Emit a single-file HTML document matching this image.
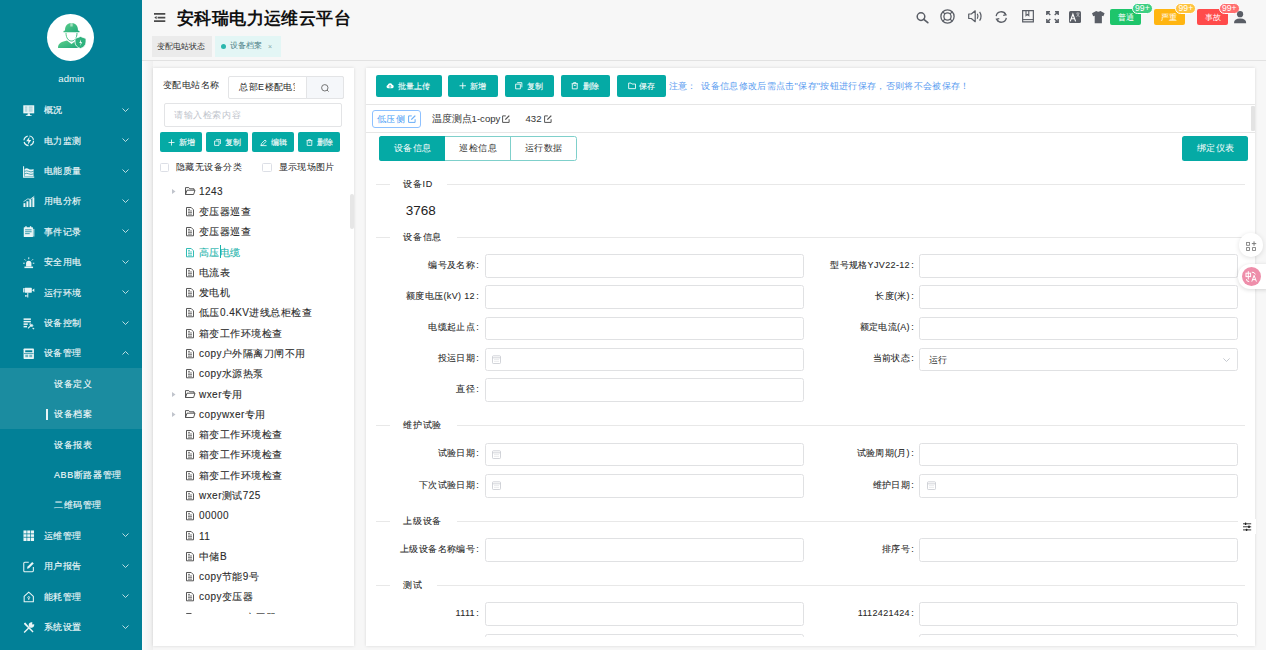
<!DOCTYPE html><html><head><meta charset="utf-8"><style>
*{margin:0;padding:0;box-sizing:border-box}
html,body{width:1266px;height:650px;overflow:hidden;background:#f7f7f7;font-family:"Liberation Sans",sans-serif;color:#333}
.ab{position:absolute}
.t{position:absolute;white-space:nowrap;line-height:1}
svg{position:absolute;overflow:visible}
</style></head><body>
<div class="ab" style="left:0;top:0;width:142px;height:650px;background:#028097"></div><div class="ab" style="left:0;top:368px;width:142px;height:61px;background:#1b8ca0"></div><div class="ab" style="left:47px;top:13.7px;width:47px;height:47px;border-radius:50%;background:#fff"></div><svg style="left:57px;top:22px" width="30" height="27" viewBox="0 0 30 27">
<defs><linearGradient id="gw" x1="0" y1="0" x2="1" y2="1"><stop offset="0" stop-color="#5ccf8a"/><stop offset="1" stop-color="#22a87a"/></linearGradient></defs>
<path d="M8 8.5 C8 3 11 1 14.5 1 C18 1 21 3 21 8.5 L22.5 9 L22.5 10.2 L6.5 10.2 L6.5 9 Z" fill="url(#gw)"/>
<rect x="13.3" y="0.5" width="2.4" height="4" fill="#fff" opacity=".5"/>
<path d="M9 11 C9 16 11.5 19 14.5 19 C17.5 19 20 16 20 11" fill="none" stroke="url(#gw)" stroke-width="1"/>
<path d="M1 26 C1 21 5 19.5 10 18.5 L14.5 22 L19 18.5 C20 18.7 21 19 22 19.5 L22 26 Z" fill="url(#gw)"/>
<path d="M23.5 14.5 L29 16.5 L29 20 C29 23 27 25.5 23.5 26.5 C20 25.5 18 23 18 20 L18 16.5 Z" fill="#2fb27d" stroke="#fff" stroke-width="0.8"/>
<path d="M24 17.5 L22.3 21 L23.8 21 L23 24 L25.2 20.2 L23.8 20.2 Z" fill="#fff"/>
</svg><div class="t" style="left:58.3px;top:73.5px;font-size:9.6px;color:#eef7f8">admin</div><div class="t" style="left:43.5px;top:106.1px;font-size:9px;letter-spacing:0.6px;color:#f4fafb;-webkit-text-stroke:0.12px #f4fafb">概况</div><svg style="left:121.5px;top:107.8px" width="7" height="4" viewBox="0 0 7 4"><path d="M0.5 0.5 L3.5 3.5 L6.5 0.5" fill="none" stroke="#cfe6ea" stroke-width="0.9"/></svg><svg style="left:23px;top:104.7px" width="11.5" height="11.5" viewBox="0 0 12 12"><rect x="0.3" y="0.3" width="11.4" height="8.4" fill="#eaf5f6"/><path d="M2 2.2 H4.5 M2 4.2 H4.5 M2 6.2 H4.5 M6 2.2 H10 M6 4.2 H10 M6 6.2 H10" stroke="#028097" stroke-width="0.7" opacity=".6"/><path d="M5 8.7 L4.6 10.6 H3 V11.6 H9 V10.6 H7.4 L7 8.7 Z" fill="#eaf5f6"/></svg><div class="t" style="left:43.5px;top:136.5px;font-size:9px;letter-spacing:0.6px;color:#f4fafb;-webkit-text-stroke:0.12px #f4fafb">电力监测</div><svg style="left:121.5px;top:138.2px" width="7" height="4" viewBox="0 0 7 4"><path d="M0.5 0.5 L3.5 3.5 L6.5 0.5" fill="none" stroke="#cfe6ea" stroke-width="0.9"/></svg><svg style="left:23px;top:135.1px" width="11.5" height="11.5" viewBox="0 0 12 12"><circle cx="6" cy="6" r="5" fill="none" stroke="#eaf5f6" stroke-width="1.3" stroke-dasharray="6 1.9"/><path d="M6.8 1.8 L3.3 6.6 H5.7 L5 10.2 L8.7 5.3 H6.3 Z" fill="#eaf5f6"/></svg><div class="t" style="left:43.5px;top:166.9px;font-size:9px;letter-spacing:0.6px;color:#f4fafb;-webkit-text-stroke:0.12px #f4fafb">电能质量</div><svg style="left:121.5px;top:168.6px" width="7" height="4" viewBox="0 0 7 4"><path d="M0.5 0.5 L3.5 3.5 L6.5 0.5" fill="none" stroke="#cfe6ea" stroke-width="0.9"/></svg><svg style="left:23px;top:165.5px" width="11.5" height="11.5" viewBox="0 0 12 12"><path d="M0.6 0.3 V11.6 H11.7" fill="none" stroke="#eaf5f6" stroke-width="1.1"/><path d="M1.6 3 Q4 1.8 6 3 T11 3 V10.8 H1.6 Z" fill="#eaf5f6"/><path d="M1.6 5.6 Q4 4.4 6 5.6 T11 5.6 M1.6 8.2 Q4 7 6 8.2 T11 8.2" fill="none" stroke="#028097" stroke-width="0.7"/></svg><div class="t" style="left:43.5px;top:197.3px;font-size:9px;letter-spacing:0.6px;color:#f4fafb;-webkit-text-stroke:0.12px #f4fafb">用电分析</div><svg style="left:121.5px;top:199.0px" width="7" height="4" viewBox="0 0 7 4"><path d="M0.5 0.5 L3.5 3.5 L6.5 0.5" fill="none" stroke="#cfe6ea" stroke-width="0.9"/></svg><svg style="left:23px;top:195.9px" width="11.5" height="11.5" viewBox="0 0 12 12"><rect x="0.5" y="7.5" width="2" height="4" fill="#eaf5f6"/><rect x="3.6" y="5.5" width="2" height="6" fill="#eaf5f6"/><rect x="6.7" y="3.5" width="2" height="8" fill="#eaf5f6"/><rect x="9.8" y="1.5" width="2" height="10" fill="#eaf5f6"/><path d="M0.5 6 L5 3 L7.5 3.5 L11.8 0.3" fill="none" stroke="#eaf5f6" stroke-width="0.8"/></svg><div class="t" style="left:43.5px;top:227.7px;font-size:9px;letter-spacing:0.6px;color:#f4fafb;-webkit-text-stroke:0.12px #f4fafb">事件记录</div><svg style="left:121.5px;top:229.4px" width="7" height="4" viewBox="0 0 7 4"><path d="M0.5 0.5 L3.5 3.5 L6.5 0.5" fill="none" stroke="#cfe6ea" stroke-width="0.9"/></svg><svg style="left:23px;top:226.3px" width="11.5" height="11.5" viewBox="0 0 12 12"><rect x="0.8" y="1.2" width="9.6" height="10.4" rx="0.6" fill="#eaf5f6"/><rect x="2.4" y="0.2" width="1.4" height="2" fill="#eaf5f6"/><rect x="7.2" y="0.2" width="1.4" height="2" fill="#eaf5f6"/><path d="M2.2 4 H9 M2.2 6 H9 M2.2 8 H7" stroke="#028097" stroke-width="0.8"/><rect x="10.8" y="3" width="1" height="8" fill="#eaf5f6"/></svg><div class="t" style="left:43.5px;top:258.1px;font-size:9px;letter-spacing:0.6px;color:#f4fafb;-webkit-text-stroke:0.12px #f4fafb">安全用电</div><svg style="left:121.5px;top:259.8px" width="7" height="4" viewBox="0 0 7 4"><path d="M0.5 0.5 L3.5 3.5 L6.5 0.5" fill="none" stroke="#cfe6ea" stroke-width="0.9"/></svg><svg style="left:23px;top:256.7px" width="11.5" height="11.5" viewBox="0 0 12 12"><path d="M3.2 10 V6.8 A2.8 2.8 0 0 1 8.8 6.8 V10 Z" fill="#eaf5f6"/><rect x="1.5" y="10" width="9" height="1.6" fill="#eaf5f6"/><path d="M6 0.3 V2.3 M1.6 2.4 L2.8 3.6 M10.4 2.4 L9.2 3.6 M0.2 6.5 H1.8 M10.2 6.5 H11.8" stroke="#eaf5f6" stroke-width="1"/></svg><div class="t" style="left:43.5px;top:288.5px;font-size:9px;letter-spacing:0.6px;color:#f4fafb;-webkit-text-stroke:0.12px #f4fafb">运行环境</div><svg style="left:121.5px;top:290.2px" width="7" height="4" viewBox="0 0 7 4"><path d="M0.5 0.5 L3.5 3.5 L6.5 0.5" fill="none" stroke="#cfe6ea" stroke-width="0.9"/></svg><svg style="left:23px;top:287.1px" width="11.5" height="11.5" viewBox="0 0 12 12"><rect x="1.8" y="0.8" width="7.4" height="5.2" rx="0.5" fill="#eaf5f6"/><rect x="0.2" y="1.2" width="1.2" height="4.4" fill="#eaf5f6"/><path d="M9.4 3.4 L11.8 1.6 V5.2 Z" fill="#eaf5f6"/><path d="M5 6 V11 M2.5 9.3 H5 M2.8 8.5 V10.1" stroke="#eaf5f6" stroke-width="1"/></svg><div class="t" style="left:43.5px;top:318.9px;font-size:9px;letter-spacing:0.6px;color:#f4fafb;-webkit-text-stroke:0.12px #f4fafb">设备控制</div><svg style="left:121.5px;top:320.6px" width="7" height="4" viewBox="0 0 7 4"><path d="M0.5 0.5 L3.5 3.5 L6.5 0.5" fill="none" stroke="#cfe6ea" stroke-width="0.9"/></svg><svg style="left:23px;top:317.5px" width="11.5" height="11.5" viewBox="0 0 12 12"><rect x="0.6" y="0.4" width="7.6" height="1.6" fill="#eaf5f6"/><rect x="0.6" y="3" width="7.6" height="1.6" fill="#eaf5f6"/><rect x="0.6" y="5.6" width="4.4" height="1.6" fill="#eaf5f6"/><rect x="0.6" y="8.2" width="3.6" height="1.6" fill="#eaf5f6"/><path d="M5.2 10.8 L9.8 6.4 M7.8 5.5 A1.6 1.6 0 1 0 10.6 7.8 M10 10.5 L11.6 11.6" fill="none" stroke="#eaf5f6" stroke-width="1.2"/></svg><div class="t" style="left:43.5px;top:349.3px;font-size:9px;letter-spacing:0.6px;color:#f4fafb;-webkit-text-stroke:0.12px #f4fafb">设备管理</div><svg style="left:121.5px;top:350.5px" width="7" height="4" viewBox="0 0 7 4"><path d="M0.5 3.5 L3.5 0.5 L6.5 3.5" fill="none" stroke="#cfe6ea" stroke-width="0.9"/></svg><svg style="left:23px;top:347.9px" width="11.5" height="11.5" viewBox="0 0 12 12"><rect x="0.6" y="0.6" width="10.8" height="10.8" rx="0.8" fill="#eaf5f6"/><rect x="2.3" y="2.4" width="7.4" height="2" fill="#028097"/><path d="M1 5.8 H11" stroke="#028097" stroke-width="0.7"/><rect x="2.4" y="7" width="3" height="2.6" fill="#028097" opacity=".55"/><rect x="6.6" y="7" width="3" height="2.6" fill="#028097" opacity=".55"/></svg><div class="t" style="left:54px;top:379.7px;font-size:9px;letter-spacing:0.6px;color:#f4fafb;-webkit-text-stroke:0.12px #f4fafb">设备定义</div><div class="t" style="left:54px;top:410.1px;font-size:9px;letter-spacing:0.6px;color:#f4fafb;-webkit-text-stroke:0.12px #f4fafb">设备档案</div><div class="t" style="left:54px;top:440.5px;font-size:9px;letter-spacing:0.6px;color:#f4fafb;-webkit-text-stroke:0.12px #f4fafb">设备报表</div><div class="t" style="left:54px;top:470.9px;font-size:9px;letter-spacing:0.6px;color:#f4fafb;-webkit-text-stroke:0.12px #f4fafb">ABB断路器管理</div><div class="t" style="left:54px;top:501.3px;font-size:9px;letter-spacing:0.6px;color:#f4fafb;-webkit-text-stroke:0.12px #f4fafb">二维码管理</div><div class="t" style="left:43.5px;top:531.7px;font-size:9px;letter-spacing:0.6px;color:#f4fafb;-webkit-text-stroke:0.12px #f4fafb">运维管理</div><svg style="left:121.5px;top:533.4px" width="7" height="4" viewBox="0 0 7 4"><path d="M0.5 0.5 L3.5 3.5 L6.5 0.5" fill="none" stroke="#cfe6ea" stroke-width="0.9"/></svg><svg style="left:23px;top:530.3px" width="11.5" height="11.5" viewBox="0 0 12 12"><rect x="0.5" y="0.5" width="3.2" height="11" fill="#eaf5f6"/><rect x="4.4" y="0.5" width="3.2" height="11" fill="#eaf5f6"/><rect x="8.3" y="0.5" width="3.2" height="11" fill="#eaf5f6"/><path d="M0.5 4 H11.5 M0.5 7.6 H11.5" stroke="#028097" stroke-width="0.8"/></svg><div class="t" style="left:43.5px;top:562.1px;font-size:9px;letter-spacing:0.6px;color:#f4fafb;-webkit-text-stroke:0.12px #f4fafb">用户报告</div><svg style="left:121.5px;top:563.8px" width="7" height="4" viewBox="0 0 7 4"><path d="M0.5 0.5 L3.5 3.5 L6.5 0.5" fill="none" stroke="#cfe6ea" stroke-width="0.9"/></svg><svg style="left:23px;top:560.7px" width="11.5" height="11.5" viewBox="0 0 12 12"><path d="M6 1.3 H1.8 A1 1 0 0 0 0.8 2.3 V10.3 A1 1 0 0 0 1.8 11.3 H9.8 A1 1 0 0 0 10.8 10.3 V6.2" fill="none" stroke="#eaf5f6" stroke-width="1.1"/><path d="M4.2 8 L4.6 6 L9.6 1 L11.2 2.6 L6.2 7.6 Z" fill="#eaf5f6"/></svg><div class="t" style="left:43.5px;top:592.5px;font-size:9px;letter-spacing:0.6px;color:#f4fafb;-webkit-text-stroke:0.12px #f4fafb">能耗管理</div><svg style="left:121.5px;top:594.2px" width="7" height="4" viewBox="0 0 7 4"><path d="M0.5 0.5 L3.5 3.5 L6.5 0.5" fill="none" stroke="#cfe6ea" stroke-width="0.9"/></svg><svg style="left:23px;top:591.1px" width="11.5" height="11.5" viewBox="0 0 12 12"><path d="M1.2 5.6 L6 1.2 L10.8 5.6 V11.2 H1.2 Z" fill="none" stroke="#eaf5f6" stroke-width="1.1" stroke-linejoin="round"/><circle cx="6" cy="6.8" r="1" fill="none" stroke="#eaf5f6" stroke-width="0.9"/><path d="M6 7.8 V9.4" stroke="#eaf5f6" stroke-width="0.9"/></svg><div class="t" style="left:43.5px;top:622.9px;font-size:9px;letter-spacing:0.6px;color:#f4fafb;-webkit-text-stroke:0.12px #f4fafb">系统设置</div><svg style="left:121.5px;top:624.6px" width="7" height="4" viewBox="0 0 7 4"><path d="M0.5 0.5 L3.5 3.5 L6.5 0.5" fill="none" stroke="#cfe6ea" stroke-width="0.9"/></svg><svg style="left:23px;top:621.5px" width="11.5" height="11.5" viewBox="0 0 12 12"><path d="M1.2 11 L6.5 5.7 M9 1 A2.2 2.2 0 1 0 11 3.2 L9.6 3.4 L8.8 2.4 Z" fill="#eaf5f6" stroke="#eaf5f6" stroke-width="1.4"/><path d="M1 1.4 L2.4 0.6 L6 4.8 L11 10 L10 11 L5 6 L1.4 2.6 Z" fill="#eaf5f6"/></svg><div class="ab" style="left:46.3px;top:409px;width:2px;height:10.7px;background:#e8f4f6"></div><svg style="left:153.6px;top:13px" width="11.5" height="9.5" viewBox="0 0 11.5 9.5">
<path d="M0 0.9 H11.3 M3.6 4.6 H11.3 M0 8.1 H11.3" stroke="#4a4a4a" stroke-width="1.6"/>
<path d="M0.3 4.6 L2.6 2.9 L2.6 6.3 Z" fill="#4a4a4a"/></svg><div class="t" style="left:176.8px;top:10px;letter-spacing:0.45px;font-size:17px;font-weight:bold;color:#111">安科瑞电力运维云平台</div><svg style="left:916px;top:12px" width="13" height="11" viewBox="0 0 13 11"><circle cx="5" cy="4.6" r="3.8" fill="none" stroke="#5a5e66" stroke-width="1.5"/><path d="M7.8 7.4 L11.8 10.6" stroke="#5a5e66" stroke-width="1.7" stroke-linecap="round"/></svg><svg style="left:940px;top:9.2px" width="15" height="15" viewBox="0 0 15 15"><circle cx="7.5" cy="7.5" r="6.6" fill="none" stroke="#5a5e66" stroke-width="1.3"/><circle cx="7.5" cy="7.5" r="3.6" fill="none" stroke="#5a5e66" stroke-width="1.3"/><path d="M2.8 2.8 L5 5 M12.2 2.8 L10 5 M2.8 12.2 L5 10 M12.2 12.2 L10 10" stroke="#5a5e66" stroke-width="1.1"/></svg><svg style="left:968.3px;top:10.2px" width="15" height="12.5" viewBox="0 0 15 12.5"><path d="M0.7 4 H3.3 L7.2 0.8 V11.7 L3.3 8.5 H0.7 Z" fill="none" stroke="#5a5e66" stroke-width="1.2" stroke-linejoin="round"/><path d="M9.3 3.8 Q10.8 6.25 9.3 8.7" fill="none" stroke="#5a5e66" stroke-width="1.2"/><path d="M11.6 1.8 Q14.6 6.25 11.6 10.7" fill="none" stroke="#5a5e66" stroke-width="1.2"/></svg><svg style="left:995.3px;top:11px" width="12.5" height="12" viewBox="0 0 12.5 12"><path d="M1.2 5.2 A5 5 0 0 1 10.6 3.5" fill="none" stroke="#5a5e66" stroke-width="1.3"/><path d="M11.3 6.8 A5 5 0 0 1 1.9 8.5" fill="none" stroke="#5a5e66" stroke-width="1.3"/><path d="M9 1.2 L11 3.8 L8.2 4.3" fill="none" stroke="#5a5e66" stroke-width="1.2"/><path d="M3.5 10.8 L1.5 8.2 L4.3 7.7" fill="none" stroke="#5a5e66" stroke-width="1.2"/></svg><svg style="left:1022px;top:10.2px" width="12" height="12.5" viewBox="0 0 12 12.5"><path d="M0.65 0.65 H11.35 V11.85 H0.65 Z" fill="none" stroke="#5a5e66" stroke-width="1.2"/><path d="M0.65 9.6 H11.35" stroke="#5a5e66" stroke-width="1.1"/><path d="M4 0.65 V5.5 L5.4 4.4 L6.8 5.5 V0.65" fill="none" stroke="#5a5e66" stroke-width="1.1"/></svg><svg style="left:1045.8px;top:11px" width="13" height="12" viewBox="0 0 13 12"><g stroke="#5a5e66" stroke-width="1.4" fill="none"><path d="M0.8 4 V0.8 H4 M0.8 0.8 L4.3 4.1"/><path d="M12.2 4 V0.8 H9 M12.2 0.8 L8.7 4.1"/><path d="M0.8 8 V11.2 H4 M0.8 11.2 L4.3 7.9"/><path d="M12.2 8 V11.2 H9 M12.2 11.2 L8.7 7.9"/></g></svg><div class="ab" style="left:1069.2px;top:11px;width:12.1px;height:11.7px;background:#5a5e66;border-radius:1.5px"></div>
<svg style="left:1069.2px;top:11px" width="12.1" height="11.7" viewBox="0 0 12.1 11.7"><path d="M1.2 10.4 L3.9 3.2 L6.6 10.4 M2.2 7.8 H5.6" fill="none" stroke="#fff" stroke-width="1.15"/><path d="M7.4 2.2 H10.4 M8.9 1.4 V2.2 M7.8 2.6 Q8.9 5.4 10.6 5.6 M10 2.6 Q9 5.2 7.4 5.6" fill="none" stroke="#d6d8dc" stroke-width="0.6"/></svg><svg style="left:1092px;top:10.7px" width="12.6" height="12.2" viewBox="0 0 12.6 12.2"><path d="M4.2 0 Q6.3 1.6 8.4 0 L12.6 2.2 L11.4 5.3 L9.9 4.7 V12.2 H2.7 V4.7 L1.2 5.3 L0 2.2 Z" fill="#5a5e66"/></svg><div class="ab" style="left:1110px;top:8.9px;width:31.2px;height:16.1px;background:#1ec56b;border-radius:2px"></div><div class="t" style="left:1117.6px;top:13.6px;font-size:8.2px;color:#fff">普通</div><div class="ab" style="left:1131.9px;top:2.8px;width:21px;height:10.8px;background:#3ecf83;border-radius:6px;border:1px solid #fff"></div><div class="t" style="left:1135.1000000000001px;top:4.3px;font-size:8.6px;color:#fff">99+</div><div class="ab" style="left:1153.6px;top:8.9px;width:31.2px;height:16.1px;background:#ffb511;border-radius:2px"></div><div class="t" style="left:1161.1999999999998px;top:13.6px;font-size:8.2px;color:#fff">严重</div><div class="ab" style="left:1175.4px;top:2.8px;width:21px;height:10.8px;background:#ffc43d;border-radius:6px;border:1px solid #fff"></div><div class="t" style="left:1178.6000000000001px;top:4.3px;font-size:8.6px;color:#fff">99+</div><div class="ab" style="left:1197px;top:8.9px;width:31.2px;height:16.1px;background:#ff4b4b;border-radius:2px"></div><div class="t" style="left:1204.6px;top:13.6px;font-size:8.2px;color:#fff">事故</div><div class="ab" style="left:1218.7px;top:2.8px;width:21px;height:10.8px;background:#ff6e6e;border-radius:6px;border:1px solid #fff"></div><div class="t" style="left:1221.9px;top:4.3px;font-size:8.6px;color:#fff">99+</div><svg style="left:1233.7px;top:10.7px" width="12.2" height="12.2" viewBox="0 0 12.2 12.2"><circle cx="6.1" cy="3.2" r="3.1" fill="#5a5e66"/><path d="M0 12.2 Q0 7.6 6.1 7.6 Q12.2 7.6 12.2 12.2 Z" fill="#5a5e66"/></svg><div class="ab" style="left:152px;top:36.2px;width:60px;height:20.6px;background:#ebebeb"></div><div class="t" style="left:157px;top:42.2px;font-size:8.3px;color:#333">变配电站状态</div><div class="ab" style="left:215px;top:36.2px;width:65.5px;height:20.6px;background:#e3f6f5"></div><div class="ab" style="left:220.6px;top:43.8px;width:5.2px;height:5.2px;border-radius:50%;background:#2ab7ad"></div><div class="t" style="left:229.6px;top:42.2px;font-size:8.1px;color:#4b7f86">设备档案</div><div class="t" style="left:268px;top:42.5px;font-size:7px;color:#8aa">×</div><div class="ab" style="left:142px;top:60px;width:1124px;height:1px;background:#e2e2e2"></div><div class="ab" style="left:142px;top:61px;width:11px;height:589px;background:linear-gradient(90deg,#fcfcfc,#efefef)"></div><div class="ab" style="left:152.8px;top:68px;width:201.3px;height:578px;background:#fff;box-shadow:0 0 3px rgba(0,0,0,.13)"></div><div class="ab" style="left:366px;top:68px;width:889.3px;height:578px;background:#fff;box-shadow:0 0 3px rgba(0,0,0,.13)"></div><div class="t" style="left:162.8px;top:81px;font-size:9px;letter-spacing:0.5px;color:#262626">变配电站名称</div><div class="ab" style="left:228.4px;top:75.5px;width:115.2px;height:23.4px;border:1px solid #e3e4e6;border-radius:2px;background:#fff"></div><div class="ab" style="left:305.5px;top:75.5px;width:38.1px;height:23.4px;border:1px solid #e3e4e6;border-left:1px solid #e3e4e6;border-radius:0 2px 2px 0;background:#f5f7fa"></div><div class="ab" style="left:238px;top:80px;width:56.7px;height:14px;overflow:hidden"><div class="t" style="left:1.2px;top:3px;font-size:9px;letter-spacing:0.45px;color:#262626">总部E楼配电室</div></div><svg style="left:320.5px;top:83.6px" width="8" height="8" viewBox="0 0 8 8"><circle cx="3.8" cy="3.8" r="3.2" fill="none" stroke="#666" stroke-width="0.9"/><path d="M6 6 L7.6 7.6" stroke="#666" stroke-width="0.9"/></svg><div class="ab" style="left:163.5px;top:102.9px;width:178.2px;height:23.7px;border:1px solid #e3e4e6;border-radius:2px;background:#fff"></div><div class="t" style="left:174px;top:110.8px;font-size:9px;letter-spacing:0.6px;color:#c0c4cc">请输入检索内容</div><div class="ab" style="left:159.6px;top:132.3px;width:42.3px;height:19.6px;background:#05aaa5;border-radius:2px"></div><svg style="left:168.1px;top:138.6px" width="7" height="7" viewBox="0 0 7 7"><path d="M3.5 0.5 V6.5 M0.5 3.5 H6.5" stroke="#fff" stroke-width="0.8"/></svg><div class="t" style="left:178.6px;top:137.8px;font-size:8.3px;color:#fff;-webkit-text-stroke:0.1px #fff">新增</div><div class="ab" style="left:205.8px;top:132.3px;width:42.3px;height:19.6px;background:#05aaa5;border-radius:2px"></div><svg style="left:214.3px;top:138.6px" width="7" height="7" viewBox="0 0 7 7"><path d="M2 0.6 H6.4 V5 M0.6 2 H5 V6.4 H0.6 Z" fill="none" stroke="#fff" stroke-width="0.8"/></svg><div class="t" style="left:224.8px;top:137.8px;font-size:8.3px;color:#fff;-webkit-text-stroke:0.1px #fff">复制</div><div class="ab" style="left:251.7px;top:132.3px;width:42.3px;height:19.6px;background:#05aaa5;border-radius:2px"></div><svg style="left:260.2px;top:138.6px" width="7" height="7" viewBox="0 0 7 7"><path d="M1 6.4 L1.4 4.6 L5 1 L6.3 2.3 L2.7 5.9 Z M0.5 6.6 H6.6" fill="none" stroke="#fff" stroke-width="0.8"/></svg><div class="t" style="left:270.7px;top:137.8px;font-size:8.3px;color:#fff;-webkit-text-stroke:0.1px #fff">编辑</div><div class="ab" style="left:297.8px;top:132.3px;width:42.3px;height:19.6px;background:#05aaa5;border-radius:2px"></div><svg style="left:306.3px;top:138.6px" width="7" height="7" viewBox="0 0 7 7"><path d="M0.6 1.6 H6.4 M2.4 1.6 V0.6 H4.6 V1.6 M1.2 1.6 V6.4 H5.8 V1.6 M2.6 3.2 H4.4" fill="none" stroke="#fff" stroke-width="0.8"/></svg><div class="t" style="left:316.8px;top:137.8px;font-size:8.3px;color:#fff;-webkit-text-stroke:0.1px #fff">删除</div><div class="ab" style="left:159.6px;top:162.7px;width:9.3px;height:9.3px;border:1px solid #dcdfe6;border-radius:1.5px;background:#fff"></div><div class="t" style="left:175.5px;top:162.6px;font-size:9px;letter-spacing:0.5px;color:#262626">隐藏无设备分类</div><div class="ab" style="left:262.4px;top:162.7px;width:9.3px;height:9.3px;border:1px solid #dcdfe6;border-radius:1.5px;background:#fff"></div><div class="t" style="left:278.8px;top:162.6px;font-size:9px;letter-spacing:0.3px;color:#262626">显示现场图片</div><div class="ab" style="left:153px;top:180px;width:201px;height:433.7px;overflow:hidden"><svg style="left:18.7px;top:8.80px" width="4" height="5" viewBox="0 0 4 5"><path d="M0 0 L3.5 2.5 L0 5 Z" fill="#c0c4cc"/></svg><svg style="left:31.6px;top:7.30px" width="10.5" height="8" viewBox="0 0 10.5 8"><path d="M0.5 7.5 V0.6 H3.8 L4.8 1.8 H9 V3 M0.5 7.5 L2 3.2 H10 L8.6 7.5 Z" fill="none" stroke="#444" stroke-width="0.9" stroke-linejoin="round"/></svg><div class="t" style="left:46px;top:6.80px;font-size:10px;letter-spacing:0.45px;color:#2a2a2a;-webkit-text-stroke:0.1px #2a2a2a">1243</div><svg style="left:32.8px;top:26.98px" width="8" height="9.3" viewBox="0 0 8 9.3"><path d="M0.5 0.5 H5.2 L7.5 2.8 V8.8 H0.5 Z" fill="none" stroke="#444" stroke-width="0.9"/><path d="M2 4 H6 M2 5.6 H6 M2 7.2 H6 M2 2.4 H4" stroke="#444" stroke-width="0.7"/></svg><div class="t" style="left:46px;top:27.08px;font-size:10px;letter-spacing:0.45px;color:#2a2a2a;-webkit-text-stroke:0.1px #2a2a2a">变压器巡查</div><svg style="left:32.8px;top:47.26px" width="8" height="9.3" viewBox="0 0 8 9.3"><path d="M0.5 0.5 H5.2 L7.5 2.8 V8.8 H0.5 Z" fill="none" stroke="#444" stroke-width="0.9"/><path d="M2 4 H6 M2 5.6 H6 M2 7.2 H6 M2 2.4 H4" stroke="#444" stroke-width="0.7"/></svg><div class="t" style="left:46px;top:47.36px;font-size:10px;letter-spacing:0.45px;color:#2a2a2a;-webkit-text-stroke:0.1px #2a2a2a">变压器巡查</div><svg style="left:32.8px;top:67.54px" width="8" height="9.3" viewBox="0 0 8 9.3"><path d="M0.5 0.5 H5.2 L7.5 2.8 V8.8 H0.5 Z" fill="none" stroke="#19b3ab" stroke-width="0.9"/><path d="M2 4 H6 M2 5.6 H6 M2 7.2 H6 M2 2.4 H4" stroke="#19b3ab" stroke-width="0.7"/></svg><div class="t" style="left:46px;top:67.64px;font-size:10px;letter-spacing:0.45px;color:#19b3ab;-webkit-text-stroke:0.1px #19b3ab">高压电缆</div><svg style="left:32.8px;top:87.82px" width="8" height="9.3" viewBox="0 0 8 9.3"><path d="M0.5 0.5 H5.2 L7.5 2.8 V8.8 H0.5 Z" fill="none" stroke="#444" stroke-width="0.9"/><path d="M2 4 H6 M2 5.6 H6 M2 7.2 H6 M2 2.4 H4" stroke="#444" stroke-width="0.7"/></svg><div class="t" style="left:46px;top:87.92px;font-size:10px;letter-spacing:0.45px;color:#2a2a2a;-webkit-text-stroke:0.1px #2a2a2a">电流表</div><svg style="left:32.8px;top:108.10px" width="8" height="9.3" viewBox="0 0 8 9.3"><path d="M0.5 0.5 H5.2 L7.5 2.8 V8.8 H0.5 Z" fill="none" stroke="#444" stroke-width="0.9"/><path d="M2 4 H6 M2 5.6 H6 M2 7.2 H6 M2 2.4 H4" stroke="#444" stroke-width="0.7"/></svg><div class="t" style="left:46px;top:108.20px;font-size:10px;letter-spacing:0.45px;color:#2a2a2a;-webkit-text-stroke:0.1px #2a2a2a">发电机</div><svg style="left:32.8px;top:128.38px" width="8" height="9.3" viewBox="0 0 8 9.3"><path d="M0.5 0.5 H5.2 L7.5 2.8 V8.8 H0.5 Z" fill="none" stroke="#444" stroke-width="0.9"/><path d="M2 4 H6 M2 5.6 H6 M2 7.2 H6 M2 2.4 H4" stroke="#444" stroke-width="0.7"/></svg><div class="t" style="left:46px;top:128.48px;font-size:10px;letter-spacing:0.45px;color:#2a2a2a;-webkit-text-stroke:0.1px #2a2a2a">低压0.4KV进线总柜检查</div><svg style="left:32.8px;top:148.66px" width="8" height="9.3" viewBox="0 0 8 9.3"><path d="M0.5 0.5 H5.2 L7.5 2.8 V8.8 H0.5 Z" fill="none" stroke="#444" stroke-width="0.9"/><path d="M2 4 H6 M2 5.6 H6 M2 7.2 H6 M2 2.4 H4" stroke="#444" stroke-width="0.7"/></svg><div class="t" style="left:46px;top:148.76px;font-size:10px;letter-spacing:0.45px;color:#2a2a2a;-webkit-text-stroke:0.1px #2a2a2a">箱变工作环境检查</div><svg style="left:32.8px;top:168.94px" width="8" height="9.3" viewBox="0 0 8 9.3"><path d="M0.5 0.5 H5.2 L7.5 2.8 V8.8 H0.5 Z" fill="none" stroke="#444" stroke-width="0.9"/><path d="M2 4 H6 M2 5.6 H6 M2 7.2 H6 M2 2.4 H4" stroke="#444" stroke-width="0.7"/></svg><div class="t" style="left:46px;top:169.04px;font-size:10px;letter-spacing:0.45px;color:#2a2a2a;-webkit-text-stroke:0.1px #2a2a2a">copy户外隔离刀闸不用</div><svg style="left:32.8px;top:189.22px" width="8" height="9.3" viewBox="0 0 8 9.3"><path d="M0.5 0.5 H5.2 L7.5 2.8 V8.8 H0.5 Z" fill="none" stroke="#444" stroke-width="0.9"/><path d="M2 4 H6 M2 5.6 H6 M2 7.2 H6 M2 2.4 H4" stroke="#444" stroke-width="0.7"/></svg><div class="t" style="left:46px;top:189.32px;font-size:10px;letter-spacing:0.45px;color:#2a2a2a;-webkit-text-stroke:0.1px #2a2a2a">copy水源热泵</div><svg style="left:18.7px;top:211.60px" width="4" height="5" viewBox="0 0 4 5"><path d="M0 0 L3.5 2.5 L0 5 Z" fill="#c0c4cc"/></svg><svg style="left:31.6px;top:210.10px" width="10.5" height="8" viewBox="0 0 10.5 8"><path d="M0.5 7.5 V0.6 H3.8 L4.8 1.8 H9 V3 M0.5 7.5 L2 3.2 H10 L8.6 7.5 Z" fill="none" stroke="#444" stroke-width="0.9" stroke-linejoin="round"/></svg><div class="t" style="left:46px;top:209.60px;font-size:10px;letter-spacing:0.45px;color:#2a2a2a;-webkit-text-stroke:0.1px #2a2a2a">wxer专用</div><svg style="left:18.7px;top:231.88px" width="4" height="5" viewBox="0 0 4 5"><path d="M0 0 L3.5 2.5 L0 5 Z" fill="#c0c4cc"/></svg><svg style="left:31.6px;top:230.38px" width="10.5" height="8" viewBox="0 0 10.5 8"><path d="M0.5 7.5 V0.6 H3.8 L4.8 1.8 H9 V3 M0.5 7.5 L2 3.2 H10 L8.6 7.5 Z" fill="none" stroke="#444" stroke-width="0.9" stroke-linejoin="round"/></svg><div class="t" style="left:46px;top:229.88px;font-size:10px;letter-spacing:0.45px;color:#2a2a2a;-webkit-text-stroke:0.1px #2a2a2a">copywxer专用</div><svg style="left:32.8px;top:250.06px" width="8" height="9.3" viewBox="0 0 8 9.3"><path d="M0.5 0.5 H5.2 L7.5 2.8 V8.8 H0.5 Z" fill="none" stroke="#444" stroke-width="0.9"/><path d="M2 4 H6 M2 5.6 H6 M2 7.2 H6 M2 2.4 H4" stroke="#444" stroke-width="0.7"/></svg><div class="t" style="left:46px;top:250.16px;font-size:10px;letter-spacing:0.45px;color:#2a2a2a;-webkit-text-stroke:0.1px #2a2a2a">箱变工作环境检查</div><svg style="left:32.8px;top:270.34px" width="8" height="9.3" viewBox="0 0 8 9.3"><path d="M0.5 0.5 H5.2 L7.5 2.8 V8.8 H0.5 Z" fill="none" stroke="#444" stroke-width="0.9"/><path d="M2 4 H6 M2 5.6 H6 M2 7.2 H6 M2 2.4 H4" stroke="#444" stroke-width="0.7"/></svg><div class="t" style="left:46px;top:270.44px;font-size:10px;letter-spacing:0.45px;color:#2a2a2a;-webkit-text-stroke:0.1px #2a2a2a">箱变工作环境检查</div><svg style="left:32.8px;top:290.62px" width="8" height="9.3" viewBox="0 0 8 9.3"><path d="M0.5 0.5 H5.2 L7.5 2.8 V8.8 H0.5 Z" fill="none" stroke="#444" stroke-width="0.9"/><path d="M2 4 H6 M2 5.6 H6 M2 7.2 H6 M2 2.4 H4" stroke="#444" stroke-width="0.7"/></svg><div class="t" style="left:46px;top:290.72px;font-size:10px;letter-spacing:0.45px;color:#2a2a2a;-webkit-text-stroke:0.1px #2a2a2a">箱变工作环境检查</div><svg style="left:32.8px;top:310.90px" width="8" height="9.3" viewBox="0 0 8 9.3"><path d="M0.5 0.5 H5.2 L7.5 2.8 V8.8 H0.5 Z" fill="none" stroke="#444" stroke-width="0.9"/><path d="M2 4 H6 M2 5.6 H6 M2 7.2 H6 M2 2.4 H4" stroke="#444" stroke-width="0.7"/></svg><div class="t" style="left:46px;top:311.00px;font-size:10px;letter-spacing:0.45px;color:#2a2a2a;-webkit-text-stroke:0.1px #2a2a2a">wxer测试725</div><svg style="left:32.8px;top:331.18px" width="8" height="9.3" viewBox="0 0 8 9.3"><path d="M0.5 0.5 H5.2 L7.5 2.8 V8.8 H0.5 Z" fill="none" stroke="#444" stroke-width="0.9"/><path d="M2 4 H6 M2 5.6 H6 M2 7.2 H6 M2 2.4 H4" stroke="#444" stroke-width="0.7"/></svg><div class="t" style="left:46px;top:331.28px;font-size:10px;letter-spacing:0.45px;color:#2a2a2a;-webkit-text-stroke:0.1px #2a2a2a">00000</div><svg style="left:32.8px;top:351.46px" width="8" height="9.3" viewBox="0 0 8 9.3"><path d="M0.5 0.5 H5.2 L7.5 2.8 V8.8 H0.5 Z" fill="none" stroke="#444" stroke-width="0.9"/><path d="M2 4 H6 M2 5.6 H6 M2 7.2 H6 M2 2.4 H4" stroke="#444" stroke-width="0.7"/></svg><div class="t" style="left:46px;top:351.56px;font-size:10px;letter-spacing:0.45px;color:#2a2a2a;-webkit-text-stroke:0.1px #2a2a2a">11</div><svg style="left:32.8px;top:371.74px" width="8" height="9.3" viewBox="0 0 8 9.3"><path d="M0.5 0.5 H5.2 L7.5 2.8 V8.8 H0.5 Z" fill="none" stroke="#444" stroke-width="0.9"/><path d="M2 4 H6 M2 5.6 H6 M2 7.2 H6 M2 2.4 H4" stroke="#444" stroke-width="0.7"/></svg><div class="t" style="left:46px;top:371.84px;font-size:10px;letter-spacing:0.45px;color:#2a2a2a;-webkit-text-stroke:0.1px #2a2a2a">中储B</div><svg style="left:32.8px;top:392.02px" width="8" height="9.3" viewBox="0 0 8 9.3"><path d="M0.5 0.5 H5.2 L7.5 2.8 V8.8 H0.5 Z" fill="none" stroke="#444" stroke-width="0.9"/><path d="M2 4 H6 M2 5.6 H6 M2 7.2 H6 M2 2.4 H4" stroke="#444" stroke-width="0.7"/></svg><div class="t" style="left:46px;top:392.12px;font-size:10px;letter-spacing:0.45px;color:#2a2a2a;-webkit-text-stroke:0.1px #2a2a2a">copy节能9号</div><svg style="left:32.8px;top:412.30px" width="8" height="9.3" viewBox="0 0 8 9.3"><path d="M0.5 0.5 H5.2 L7.5 2.8 V8.8 H0.5 Z" fill="none" stroke="#444" stroke-width="0.9"/><path d="M2 4 H6 M2 5.6 H6 M2 7.2 H6 M2 2.4 H4" stroke="#444" stroke-width="0.7"/></svg><div class="t" style="left:46px;top:412.40px;font-size:10px;letter-spacing:0.45px;color:#2a2a2a;-webkit-text-stroke:0.1px #2a2a2a">copy变压器</div><svg style="left:32.8px;top:432.58px" width="8" height="9.3" viewBox="0 0 8 9.3"><path d="M0.5 0.5 H5.2 L7.5 2.8 V8.8 H0.5 Z" fill="none" stroke="#444" stroke-width="0.9"/><path d="M2 4 H6 M2 5.6 H6 M2 7.2 H6 M2 2.4 H4" stroke="#444" stroke-width="0.7"/></svg><div class="t" style="left:46px;top:432.68px;font-size:10px;letter-spacing:0.45px;color:#2a2a2a;-webkit-text-stroke:0.1px #2a2a2a">copycopy变压器</div></div><div class="ab" style="left:220px;top:244.6px;width:0.9px;height:13.6px;background:#19b3ab"></div><div class="ab" style="left:350.2px;top:194px;width:4.3px;height:34.8px;background:#e6e6e6;border-radius:2px"></div><div class="ab" style="left:375.8px;top:75.2px;width:65.9px;height:21.6px;background:#05aaa5;border-radius:2px"></div><svg style="left:386.2px;top:82.3px" width="7.5" height="7.5" viewBox="0 0 7 7"><path d="M1.8 5.8 A1.6 1.6 0 0 1 1.6 2.7 A2.3 2.3 0 0 1 5.9 2.5 A1.7 1.7 0 0 1 5.9 5.8 Z" fill="#fff"/><path d="M3.8 5.6 V3.2 M2.9 4.1 L3.8 3.2 L4.7 4.1" stroke="#05aaa5" stroke-width="0.7" fill="none"/></svg><div class="t" style="left:397.7px;top:81.5px;font-size:8.4px;color:#fff;-webkit-text-stroke:0.1px #fff">批量上传</div><div class="ab" style="left:448.2px;top:75.2px;width:49.7px;height:21.6px;background:#05aaa5;border-radius:2px"></div><svg style="left:458.9px;top:82.3px" width="7.5" height="7.5" viewBox="0 0 7 7"><path d="M3.5 0.5 V6.5 M0.5 3.5 H6.5" stroke="#fff" stroke-width="0.8"/></svg><div class="t" style="left:470.4px;top:81.5px;font-size:8.4px;color:#fff;-webkit-text-stroke:0.1px #fff">新增</div><div class="ab" style="left:504.5px;top:75.2px;width:49.5px;height:21.6px;background:#05aaa5;border-radius:2px"></div><svg style="left:515.1px;top:82.3px" width="7.5" height="7.5" viewBox="0 0 7 7"><path d="M2 0.6 H6.4 V5 M0.6 2 H5 V6.4 H0.6 Z" fill="none" stroke="#fff" stroke-width="0.8"/></svg><div class="t" style="left:526.6px;top:81.5px;font-size:8.4px;color:#fff;-webkit-text-stroke:0.1px #fff">复制</div><div class="ab" style="left:560.7px;top:75.2px;width:49.0px;height:21.6px;background:#05aaa5;border-radius:2px"></div><svg style="left:571.1px;top:82.3px" width="7.5" height="7.5" viewBox="0 0 7 7"><path d="M0.6 1.6 H6.4 M2.4 1.6 V0.6 H4.6 V1.6 M1.2 1.6 V6.4 H5.8 V1.6 M2.6 3.2 H4.4" fill="none" stroke="#fff" stroke-width="0.8"/></svg><div class="t" style="left:582.6px;top:81.5px;font-size:8.4px;color:#fff;-webkit-text-stroke:0.1px #fff">删除</div><div class="ab" style="left:617.1px;top:75.2px;width:49.0px;height:21.6px;background:#05aaa5;border-radius:2px"></div><svg style="left:627.5px;top:82.3px" width="7.5" height="7.5" viewBox="0 0 7 7"><path d="M0.6 1 H2.8 L3.6 1.9 H7 V6.2 H0.6 Z" fill="none" stroke="#fff" stroke-width="0.8"/></svg><div class="t" style="left:639.0px;top:81.5px;font-size:8.4px;color:#fff;-webkit-text-stroke:0.1px #fff">保存</div><div class="t" style="left:669.3px;top:82px;font-size:9.2px;color:#5a9cf0">注意：</div><div class="t" style="left:701.3px;top:82px;font-size:9.2px;letter-spacing:0.33px;color:#5a9cf0">设备信息修改后需点击"保存"按钮进行保存，否则将不会被保存！</div><div class="ab" style="left:365.5px;top:103.8px;width:889.8px;height:1px;background:#e6e6e6"></div><div class="ab" style="left:365.5px;top:131.9px;width:889.8px;height:1px;background:#e6e6e6"></div><div class="ab" style="left:1251.1px;top:105.5px;width:3.9px;height:25.8px;background:#e3e3e3;border-radius:1px"></div><div class="ab" style="left:372.3px;top:110px;width:48.3px;height:18.1px;border:1px solid #8ec1ff;border-radius:3px;background:#fff"></div><div class="t" style="left:377px;top:114.8px;font-size:9px;letter-spacing:0.45px;color:#4d9ef5">低压侧</div><svg style="left:408.2px;top:115.3px" width="8" height="8" viewBox="0 0 8 8"><path d="M3.8 0.9 H0.6 V7.4 H7.1 V4.2" fill="none" stroke="#6aaef7" stroke-width="1"/><path d="M3.3 4.6 L7.3 0.6" stroke="#6aaef7" stroke-width="1.3"/></svg><div class="t" style="left:431.6px;top:114.3px;font-size:9.6px;color:#333">温度测点1-copy</div><svg style="left:502px;top:115.3px" width="8" height="8" viewBox="0 0 8 8"><path d="M3.8 0.9 H0.6 V7.4 H7.1 V4.2" fill="none" stroke="#555" stroke-width="1"/><path d="M3.3 4.6 L7.3 0.6" stroke="#555" stroke-width="1.3"/></svg><div class="t" style="left:525.5px;top:114.3px;font-size:9.6px;color:#333">432</div><svg style="left:544.2px;top:115.3px" width="8" height="8" viewBox="0 0 8 8"><path d="M3.8 0.9 H0.6 V7.4 H7.1 V4.2" fill="none" stroke="#555" stroke-width="1"/><path d="M3.3 4.6 L7.3 0.6" stroke="#555" stroke-width="1.3"/></svg><div class="ab" style="left:379.2px;top:136.1px;width:197.4px;height:24.7px;border:1px solid #7fd0cb;border-radius:2.5px;background:#fff"></div><div class="ab" style="left:379.2px;top:136.1px;width:66.3px;height:24.7px;background:#05aaa5;border-radius:2.5px 0 0 2.5px"></div><div class="ab" style="left:510.1px;top:136.1px;width:1px;height:24.7px;background:#7fd0cb"></div><div class="t" style="left:393.5px;top:143.6px;font-size:9px;letter-spacing:0.55px;color:#fff">设备信息</div><div class="t" style="left:459px;top:143.6px;font-size:9px;letter-spacing:0.55px;color:#333">巡检信息</div><div class="t" style="left:524.5px;top:143.6px;font-size:9px;letter-spacing:0.55px;color:#333">运行数据</div><div class="ab" style="left:1182.2px;top:136.2px;width:66.2px;height:24.4px;background:#05aaa5;border-radius:2.5px"></div><div class="t" style="left:1196.6px;top:143.8px;font-size:9px;letter-spacing:0.6px;color:#fff">绑定仪表</div><div class="ab" style="left:366px;top:165px;width:889px;height:471.7px;overflow:hidden"><div class="ab" style="left:10px;top:18.7px;width:13.5px;height:1px;background:#e8e8e8"></div><div class="t" style="left:37px;top:14.6px;font-size:9px;letter-spacing:0.75px;color:#262626;-webkit-text-stroke:0.08px #262626">设备ID</div><div class="ab" style="left:80.5px;top:18.7px;width:798.7px;height:1px;background:#e8e8e8"></div><div class="t" style="left:39.69999999999999px;top:38.5px;font-size:13.5px;color:#222">3768</div><div class="ab" style="left:10px;top:71.8px;width:13.5px;height:1px;background:#e8e8e8"></div><div class="t" style="left:37px;top:67.7px;font-size:9px;letter-spacing:0.75px;color:#262626;-webkit-text-stroke:0.08px #262626">设备信息</div><div class="ab" style="left:90.5px;top:71.8px;width:788.7px;height:1px;background:#e8e8e8"></div><div class="t" style="right:776.0px;top:95.9px;font-size:9px;letter-spacing:0.35px;color:#262626;-webkit-text-stroke:0.08px #262626">编号及名称<span style="margin-left:1.2px">:</span></div><div class="ab" style="left:118.5px;top:89.2px;width:319px;height:23.8px;border:1px solid #e0e1e3;border-radius:2.5px;background:#fff"></div><div class="t" style="right:341.0px;top:95.9px;font-size:9px;letter-spacing:0.35px;color:#262626;-webkit-text-stroke:0.08px #262626">型号规格YJV22-12<span style="margin-left:1.2px">:</span></div><div class="ab" style="left:553.3px;top:89.2px;width:319px;height:23.8px;border:1px solid #e0e1e3;border-radius:2.5px;background:#fff"></div><div class="t" style="right:776.0px;top:127.1px;font-size:9px;letter-spacing:0.35px;color:#262626;-webkit-text-stroke:0.08px #262626">额度电压(kV) 12<span style="margin-left:1.2px">:</span></div><div class="ab" style="left:118.5px;top:120.4px;width:319px;height:23.8px;border:1px solid #e0e1e3;border-radius:2.5px;background:#fff"></div><div class="t" style="right:341.0px;top:127.1px;font-size:9px;letter-spacing:0.35px;color:#262626;-webkit-text-stroke:0.08px #262626">长度(米)<span style="margin-left:1.2px">:</span></div><div class="ab" style="left:553.3px;top:120.4px;width:319px;height:23.8px;border:1px solid #e0e1e3;border-radius:2.5px;background:#fff"></div><div class="t" style="right:776.0px;top:158.3px;font-size:9px;letter-spacing:0.35px;color:#262626;-webkit-text-stroke:0.08px #262626">电缆起止点<span style="margin-left:1.2px">:</span></div><div class="ab" style="left:118.5px;top:151.6px;width:319px;height:23.8px;border:1px solid #e0e1e3;border-radius:2.5px;background:#fff"></div><div class="t" style="right:341.0px;top:158.3px;font-size:9px;letter-spacing:0.35px;color:#262626;-webkit-text-stroke:0.08px #262626">额定电流(A)<span style="margin-left:1.2px">:</span></div><div class="ab" style="left:553.3px;top:151.6px;width:319px;height:23.8px;border:1px solid #e0e1e3;border-radius:2.5px;background:#fff"></div><div class="t" style="right:776.0px;top:189.4px;font-size:9px;letter-spacing:0.35px;color:#262626;-webkit-text-stroke:0.08px #262626">投运日期<span style="margin-left:1.2px">:</span></div><div class="ab" style="left:118.5px;top:182.7px;width:319px;height:23.8px;border:1px solid #e0e1e3;border-radius:2.5px;background:#fff"></div><svg style="left:126.0px;top:189.9px" width="9" height="9" viewBox="0 0 9 9"><rect x="0.5" y="0.8" width="8" height="7.7" rx="0.8" fill="#fff" stroke="#c6c9cf" stroke-width="0.8"/><path d="M0.5 2.8 H8.5" stroke="#c6c9cf" stroke-width="0.8"/><path d="M2 4.6 H7 M2 6.4 H7" stroke="#dcdde0" stroke-width="0.6"/></svg><div class="t" style="right:341.0px;top:189.4px;font-size:9px;letter-spacing:0.35px;color:#262626;-webkit-text-stroke:0.08px #262626">当前状态<span style="margin-left:1.2px">:</span></div><div class="ab" style="left:553.3px;top:182.7px;width:319px;height:23.8px;border:1px solid #e0e1e3;border-radius:2.5px;background:#fff"></div><div class="t" style="left:563.3px;top:189.7px;font-size:9.4px;color:#333">运行</div><svg style="left:857.3px;top:192.9px" width="7" height="4" viewBox="0 0 7 4"><path d="M0.4 0.4 L3.5 3.5 L6.6 0.4" fill="none" stroke="#b8bcc4" stroke-width="0.8"/></svg><div class="t" style="right:776.0px;top:220.1px;font-size:9px;letter-spacing:0.35px;color:#262626;-webkit-text-stroke:0.08px #262626">直径<span style="margin-left:1.2px">:</span></div><div class="ab" style="left:118.5px;top:213.4px;width:319px;height:23.8px;border:1px solid #e0e1e3;border-radius:2.5px;background:#fff"></div><div class="ab" style="left:10px;top:260.3px;width:13.5px;height:1px;background:#e8e8e8"></div><div class="t" style="left:37px;top:256.2px;font-size:9px;letter-spacing:0.75px;color:#262626;-webkit-text-stroke:0.08px #262626">维护试验</div><div class="ab" style="left:90.5px;top:260.3px;width:788.7px;height:1px;background:#e8e8e8"></div><div class="t" style="right:776.0px;top:284.4px;font-size:9px;letter-spacing:0.35px;color:#262626;-webkit-text-stroke:0.08px #262626">试验日期<span style="margin-left:1.2px">:</span></div><div class="ab" style="left:118.5px;top:277.7px;width:319px;height:23.8px;border:1px solid #e0e1e3;border-radius:2.5px;background:#fff"></div><svg style="left:126.0px;top:284.9px" width="9" height="9" viewBox="0 0 9 9"><rect x="0.5" y="0.8" width="8" height="7.7" rx="0.8" fill="#fff" stroke="#c6c9cf" stroke-width="0.8"/><path d="M0.5 2.8 H8.5" stroke="#c6c9cf" stroke-width="0.8"/><path d="M2 4.6 H7 M2 6.4 H7" stroke="#dcdde0" stroke-width="0.6"/></svg><div class="t" style="right:341.0px;top:284.4px;font-size:9px;letter-spacing:0.35px;color:#262626;-webkit-text-stroke:0.08px #262626">试验周期(月)<span style="margin-left:1.2px">:</span></div><div class="ab" style="left:553.3px;top:277.7px;width:319px;height:23.8px;border:1px solid #e0e1e3;border-radius:2.5px;background:#fff"></div><div class="t" style="right:776.0px;top:315.6px;font-size:9px;letter-spacing:0.35px;color:#262626;-webkit-text-stroke:0.08px #262626">下次试验日期<span style="margin-left:1.2px">:</span></div><div class="ab" style="left:118.5px;top:308.9px;width:319px;height:23.8px;border:1px solid #e0e1e3;border-radius:2.5px;background:#fff"></div><svg style="left:126.0px;top:316.1px" width="9" height="9" viewBox="0 0 9 9"><rect x="0.5" y="0.8" width="8" height="7.7" rx="0.8" fill="#fff" stroke="#c6c9cf" stroke-width="0.8"/><path d="M0.5 2.8 H8.5" stroke="#c6c9cf" stroke-width="0.8"/><path d="M2 4.6 H7 M2 6.4 H7" stroke="#dcdde0" stroke-width="0.6"/></svg><div class="t" style="right:341.0px;top:315.6px;font-size:9px;letter-spacing:0.35px;color:#262626;-webkit-text-stroke:0.08px #262626">维护日期<span style="margin-left:1.2px">:</span></div><div class="ab" style="left:553.3px;top:308.9px;width:319px;height:23.8px;border:1px solid #e0e1e3;border-radius:2.5px;background:#fff"></div><svg style="left:560.8px;top:316.1px" width="9" height="9" viewBox="0 0 9 9"><rect x="0.5" y="0.8" width="8" height="7.7" rx="0.8" fill="#fff" stroke="#c6c9cf" stroke-width="0.8"/><path d="M0.5 2.8 H8.5" stroke="#c6c9cf" stroke-width="0.8"/><path d="M2 4.6 H7 M2 6.4 H7" stroke="#dcdde0" stroke-width="0.6"/></svg><div class="ab" style="left:10px;top:355.7px;width:13.5px;height:1px;background:#e8e8e8"></div><div class="t" style="left:37px;top:351.6px;font-size:9px;letter-spacing:0.75px;color:#262626;-webkit-text-stroke:0.08px #262626">上级设备</div><div class="ab" style="left:90.5px;top:355.7px;width:788.7px;height:1px;background:#e8e8e8"></div><div class="t" style="right:776.0px;top:380.1px;font-size:9px;letter-spacing:0.35px;color:#262626;-webkit-text-stroke:0.08px #262626">上级设备名称编号<span style="margin-left:1.2px">:</span></div><div class="ab" style="left:118.5px;top:373.4px;width:319px;height:23.8px;border:1px solid #e0e1e3;border-radius:2.5px;background:#fff"></div><div class="t" style="right:341.0px;top:380.1px;font-size:9px;letter-spacing:0.35px;color:#262626;-webkit-text-stroke:0.08px #262626">排序号<span style="margin-left:1.2px">:</span></div><div class="ab" style="left:553.3px;top:373.4px;width:319px;height:23.8px;border:1px solid #e0e1e3;border-radius:2.5px;background:#fff"></div><div class="ab" style="left:10px;top:419.7px;width:13.5px;height:1px;background:#e8e8e8"></div><div class="t" style="left:37px;top:415.6px;font-size:9px;letter-spacing:0.75px;color:#262626;-webkit-text-stroke:0.08px #262626">测试</div><div class="ab" style="left:70.5px;top:419.7px;width:808.7px;height:1px;background:#e8e8e8"></div><div class="t" style="right:776.0px;top:444.1px;font-size:9px;letter-spacing:0.35px;color:#262626;-webkit-text-stroke:0.08px #262626">1111<span style="margin-left:1.2px">:</span></div><div class="ab" style="left:118.5px;top:437.4px;width:319px;height:23.8px;border:1px solid #e0e1e3;border-radius:2.5px;background:#fff"></div><div class="t" style="right:341.0px;top:444.1px;font-size:9px;letter-spacing:0.35px;color:#262626;-webkit-text-stroke:0.08px #262626">1112421424<span style="margin-left:1.2px">:</span></div><div class="ab" style="left:553.3px;top:437.4px;width:319px;height:23.8px;border:1px solid #e0e1e3;border-radius:2.5px;background:#fff"></div><div class="ab" style="left:118.5px;top:468.5px;width:319px;height:23.8px;border:1px solid #e0e1e3;border-radius:2.5px;background:#fff"></div><div class="ab" style="left:553.3px;top:468.5px;width:319px;height:23.8px;border:1px solid #e0e1e3;border-radius:2.5px;background:#fff"></div></div><div class="ab" style="left:1238px;top:264px;width:30px;height:24.6px;background:#fff;border-radius:12px 0 0 12px;box-shadow:0 1px 4px rgba(0,0,0,.15)"></div><div class="ab" style="left:1241.7px;top:267px;width:19px;height:19px;border-radius:50%;background:#ee8eaa"></div><svg style="left:1241.7px;top:267px" width="19" height="19" viewBox="0 0 19 19"><g fill="none" stroke="#fff" stroke-width="1"><rect x="4" y="6.2" width="4.6" height="3.4"/><path d="M6.3 4.2 V12.4"/><path d="M4.4 12.2 Q4.6 14.6 7.2 14.6"/><path d="M9.8 5.2 Q12.6 5 13.4 7.4"/><path d="M9.8 14.6 L12.1 8.4 L14.4 14.6 M10.6 12.6 H13.6"/></g></svg><div class="ab" style="left:1239.2px;top:233.2px;width:23.5px;height:23.5px;border-radius:50%;background:#fff;box-shadow:0 1px 5px rgba(0,0,0,.12)"></div><svg style="left:1246px;top:241px" width="10.4" height="10" viewBox="0 0 10.4 10"><g fill="none" stroke="#7a7a7a" stroke-width="0.85"><rect x="0.6" y="1.4" width="2.9" height="2.9"/><rect x="0.6" y="6.6" width="2.9" height="2.9"/><rect x="6.6" y="6.6" width="2.9" height="2.9"/><path d="M8.05 0.4 V4.8 M5.85 2.6 H10.25" stroke-width="1"/></g></svg><div class="ab" style="left:1238px;top:518.5px;width:17.5px;height:15px;background:#fff"></div><svg style="left:1243px;top:521.5px" width="8.2" height="9.5" viewBox="0 0 8.2 9.5"><g stroke="#222" stroke-width="0.9"><path d="M0 1.8 H8.2 M0 4.8 H8.2 M0 7.9 H8.2"/></g><g fill="#222"><rect x="1.9" y="0.6" width="1.4" height="2.4" rx="0.5"/><rect x="5.2" y="3.6" width="1.6" height="2.4" rx="0.5"/><rect x="2.9" y="6.7" width="1.4" height="2.4" rx="0.5"/></g></svg></body></html>
